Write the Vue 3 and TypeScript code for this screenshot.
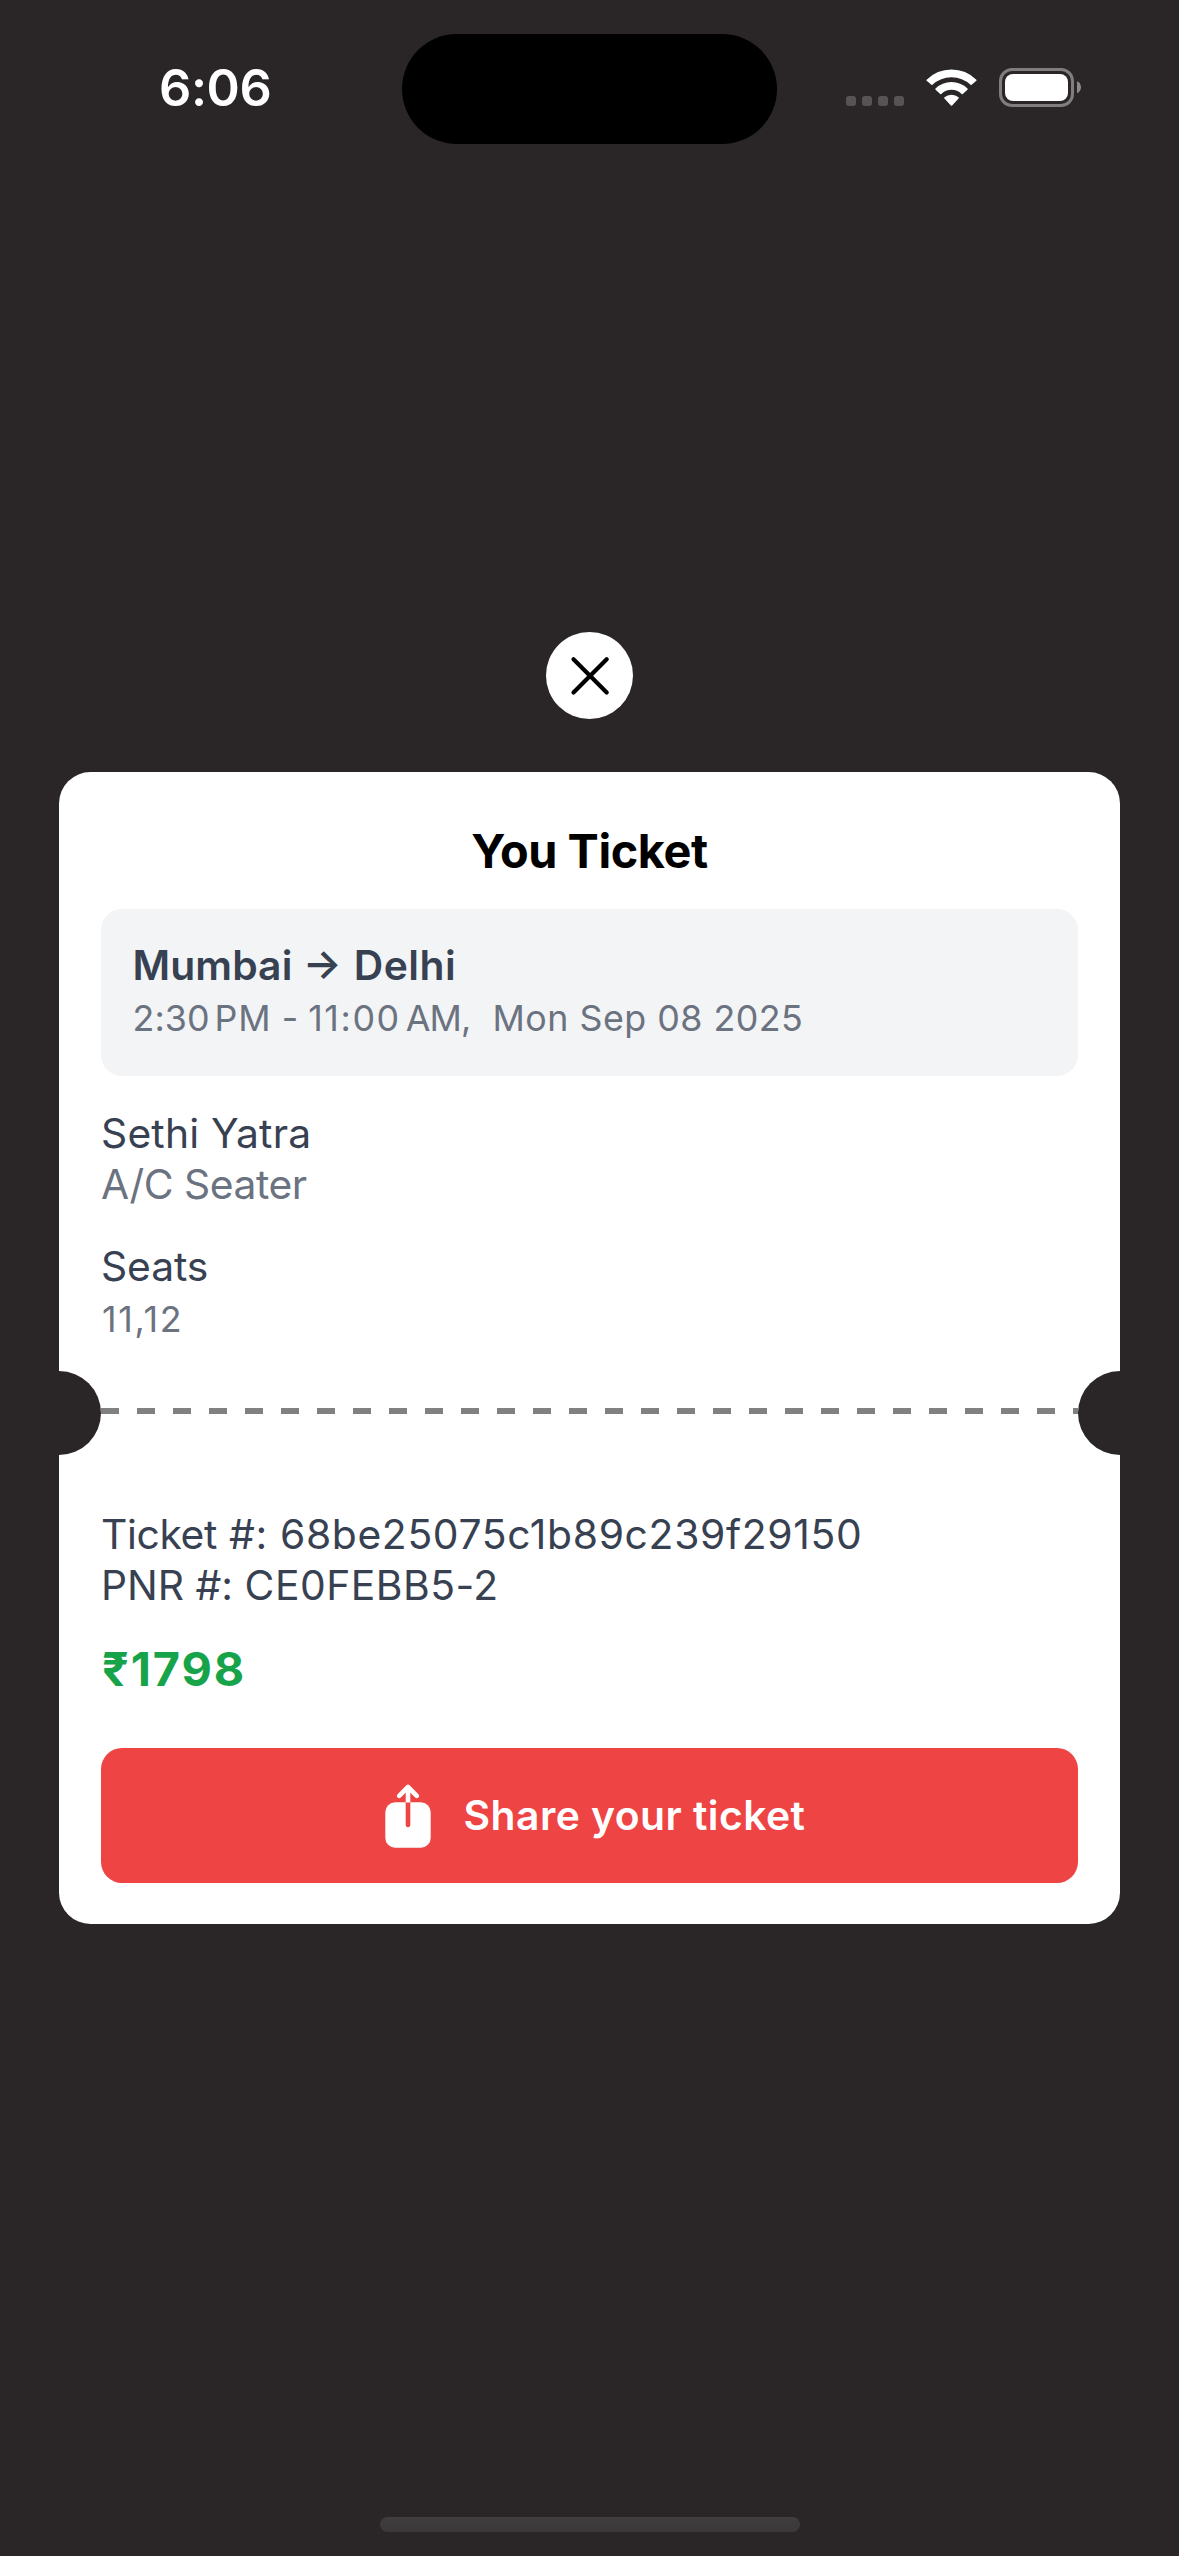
<script setup lang="ts">
interface TextPart {
  text: string
  kind: string
}

const time = '6:06'
const signalDots = [0, 1, 2, 3]

const schedule: TextPart[] = [
  { text: '2:30', kind: 'hour' },
  { text: '\u2009', kind: 'thin' },
  { text: 'PM', kind: 'pm' },
  { text: ' - ', kind: 'sep' },
  { text: '11:00', kind: 'arrive' },
  { text: '\u2009', kind: 'thin' },
  { text: 'AM,', kind: 'am' },
  { text: '  ', kind: 'gap' },
  { text: 'Mon Sep 08 2025', kind: 'date' },
]

const ticket = {
  from: 'Mumbai',
  to: 'Delhi',
  company: 'Sethi Yatra',
  busType: 'A/C Seater',
  seats: '11,12',
  id: '68be25075c1b89c239f29150',
  pnr: 'CE0FEBB5-2',
  price: '₹1798',
}
</script>

<template>
  <main class="screen">
    <header class="status">
      <span class="time">{{ time }}</span>
      <div class="island"></div>
      <div class="dots"><i v-for="d in signalDots" :key="d"></i></div>
      <svg class="wifi" width="51" height="38" viewBox="0 0 51 38">
        <g fill="#fff" stroke="#fff" stroke-width="1.6" stroke-linejoin="round">
          <path d="M1.2 11.2 A34.6 34.6 0 0 1 49.8 11.2 L45.1 15.2 A28.4 28.4 0 0 0 5.9 15.2 Z" />
          <path d="M10.1 20.1 A22 22 0 0 1 40.9 20.1 L36.2 24.3 A15.6 15.6 0 0 0 14.8 24.3 Z" />
          <path d="M19 28.9 A9.8 9.8 0 0 1 32 28.9 L25.5 36 Z" />
        </g>
      </svg>
      <svg class="battery" width="82" height="39" viewBox="0 0 82 39">
        <rect x="1.5" y="1.5" width="72" height="36" rx="11.5" fill="none" stroke="#807d7e" stroke-width="3" />
        <rect x="6" y="6" width="63" height="27" rx="8" fill="#fff" />
        <path d="M78 13.3 C80.6 14.4 82 16.8 82 19.3 S80.6 24.2 78 25.3 Z" fill="#8c898a" />
      </svg>
    </header>

    <button class="close" aria-label="Close">
      <svg width="87" height="87" viewBox="0 0 87 87">
        <path d="M27.5 27.2 L60.7 60.4 M60.7 27.2 L27.5 60.4" fill="none" stroke="#000" stroke-width="4.2" stroke-linecap="round" />
      </svg>
    </button>

    <section class="card">
      <h1 class="title">You Ticket</h1>

      <div class="trip">
        <div class="route">{{ ticket.from }} <span class="arrow">→</span> <span class="to">{{ ticket.to }}</span></div>
        <div class="schedule"><span v-for="(p, i) in schedule" :key="i" :class="p.kind">{{ p.text }}</span></div>
      </div>

      <div class="line company">{{ ticket.company }}</div>
      <div class="line bus">{{ ticket.busType }}</div>
      <div class="line seats">Seats</div>
      <div class="seat-list">{{ ticket.seats }}</div>

      <div class="tear">
        <div class="notch left"></div>
        <div class="dashes"></div>
        <div class="notch right"></div>
      </div>

      <div class="line number"><span class="label">Ticket</span><span class="hash"> #: </span><span class="id">{{ ticket.id }}</span></div>
      <div class="line">PNR #: <span class="pnr">{{ ticket.pnr }}</span></div>
      <div class="price">{{ ticket.price }}</div>

      <button class="share">
        <svg width="66" height="66" viewBox="0 0 66 66">
          <rect x="10.3" y="20.3" width="45.4" height="45.4" rx="9.8" fill="#fff" />
          <path d="M30.7 20 V43 a2.3 2.3 0 0 0 4.6 0 V20 Z" fill="#ef4444" />
          <path d="M24.2 13.8 L33 5 L41.8 13.8" fill="none" stroke="#fff" stroke-width="4.6" stroke-linecap="round" stroke-linejoin="round" />
          <path d="M33 5 V20" stroke="#fff" stroke-width="4.6" />
          <path d="M30.7 20.3 H35.3" stroke="#fff" stroke-width="1" opacity="0.6" />
        </svg>
        <span>Share your ticket</span>
      </button>
    </section>

    <div class="home"></div>
  </main>
</template>

<style>
body {
  margin: 0;
  background: #2a2627;
}
</style>

<style scoped>
.screen {
  width: 1179px;
  height: 2556px;
  background: #2a2627;
  display: flex;
  flex-direction: column;
  align-items: center;
  overflow: hidden;
  font-family: Inter, "Noto Sans", sans-serif;
}

button {
  border: 0;
  padding: 0;
  font-family: inherit;
}

svg {
  display: block;
  flex: none;
}

.status {
  width: 100%;
  height: 176px;
  box-sizing: border-box;
  display: flex;
  align-items: flex-start;
  flex: none;
}

.time {
  width: 243px;
  margin: 58px 0 0 159px;
  font-size: 50.5px;
  line-height: 60px;
  font-weight: 600;
  letter-spacing: -0.4px;
  color: #fff;
}

.island {
  width: 375px;
  height: 110px;
  margin-top: 34px;
  border-radius: 55px;
  background: #000;
}

.dots {
  display: flex;
  gap: 6px;
  margin: 96px 0 0 69px;
}

.dots i {
  width: 10px;
  height: 10px;
  border-radius: 3px;
  background: #575253;
}

.wifi {
  margin: 68.5px 0 0 22px;
}

.battery {
  margin: 68px 0 0 22px;
}

.close {
  width: 87px;
  height: 87px;
  margin-top: 456px;
  border-radius: 50%;
  background: #fff;
  flex: none;
}

.card {
  width: 1061px;
  height: 1152px;
  box-sizing: border-box;
  margin-top: 53px;
  padding: 49px 42px 0;
  border-radius: 31.5px;
  background: #fff;
  display: flex;
  flex-direction: column;
  flex: none;
}

.title {
  margin: 0 0 28px;
  font-size: 46.8px;
  line-height: 60px;
  font-weight: 700;
  letter-spacing: -0.4px;
  text-align: center;
  color: #000;
}

.trip {
  height: 167px;
  box-sizing: border-box;
  padding: 31px 31.5px 0;
  border-radius: 21px;
  background: #f3f4f6;
}

.route {
  font-size: 40.8px;
  line-height: 51px;
  font-weight: 600;
  letter-spacing: 0.1px;
  color: #374151;
}

.arrow {
  margin: 0 1.5px 0 0;
  line-height: 0;
  vertical-align: 2px;
}

.to { letter-spacing: 0.5px; }

.schedule {
  margin-top: 3px;
  font-size: 35.8px;
  line-height: 48px;
  white-space: pre;
  color: #6b7280;
}

.hour { letter-spacing: 0.08px; }
.thin { letter-spacing: -1.6px; }
.pm { letter-spacing: 0.9px; }
.arrive { letter-spacing: 1.6px; }
.am { letter-spacing: -0.9px; }
.gap { letter-spacing: 1px; }
.date { letter-spacing: 0.48px; }

.line {
  font-size: 40.8px;
  line-height: 51px;
  color: #374151;
  white-space: pre;
}

.company {
  margin-top: 32px;
  letter-spacing: 0.2px;
}

.bus {
  letter-spacing: -0.45px;
  color: #6b7280;
}

.seats {
  margin-top: 31px;
  letter-spacing: -0.1px;
}

.seat-list {
  margin-top: 3px;
  padding-left: 1px;
  font-size: 35.8px;
  line-height: 48px;
  letter-spacing: 1.7px;
  color: #6b7280;
}

.tear {
  height: 84px;
  margin: 28px -42px 0;
  display: flex;
}

.notch {
  width: 42px;
  height: 84px;
  background: #2a2627;
}

.left { border-radius: 0 42px 42px 0; }
.right { border-radius: 42px 0 0 42px; }

.dashes {
  flex: 1;
  height: 6px;
  margin-top: 37px;
  background: repeating-linear-gradient(90deg, #808080 0 18px, transparent 18px 36px);
}

.number { margin-top: 54px; }
.label { letter-spacing: -0.36px; }
.hash { letter-spacing: 0.6px; }
.id { letter-spacing: 0.66px; }
.pnr { letter-spacing: 0.5px; }

.price {
  margin-top: 28px;
  padding-left: 1px;
  font-size: 46.8px;
  line-height: 60px;
  font-weight: 700;
  letter-spacing: 1.95px;
  color: #16a34a;
}

.share {
  height: 135px;
  margin-top: 49px;
  padding-left: 1px;
  border-radius: 21px;
  background: #ef4444;
  color: #fff;
  display: flex;
  align-items: center;
  justify-content: center;
  gap: 23px;
  font-size: 40.8px;
  line-height: 51px;
  font-weight: 600;
  letter-spacing: 0.47px;
}

.share svg {
  margin-top: -1px;
}

.home {
  width: 420px;
  height: 15px;
  margin-top: 593px;
  border-radius: 8px;
  background: linear-gradient(#403d3e, #3b3839);
  flex: none;
}
</style>
